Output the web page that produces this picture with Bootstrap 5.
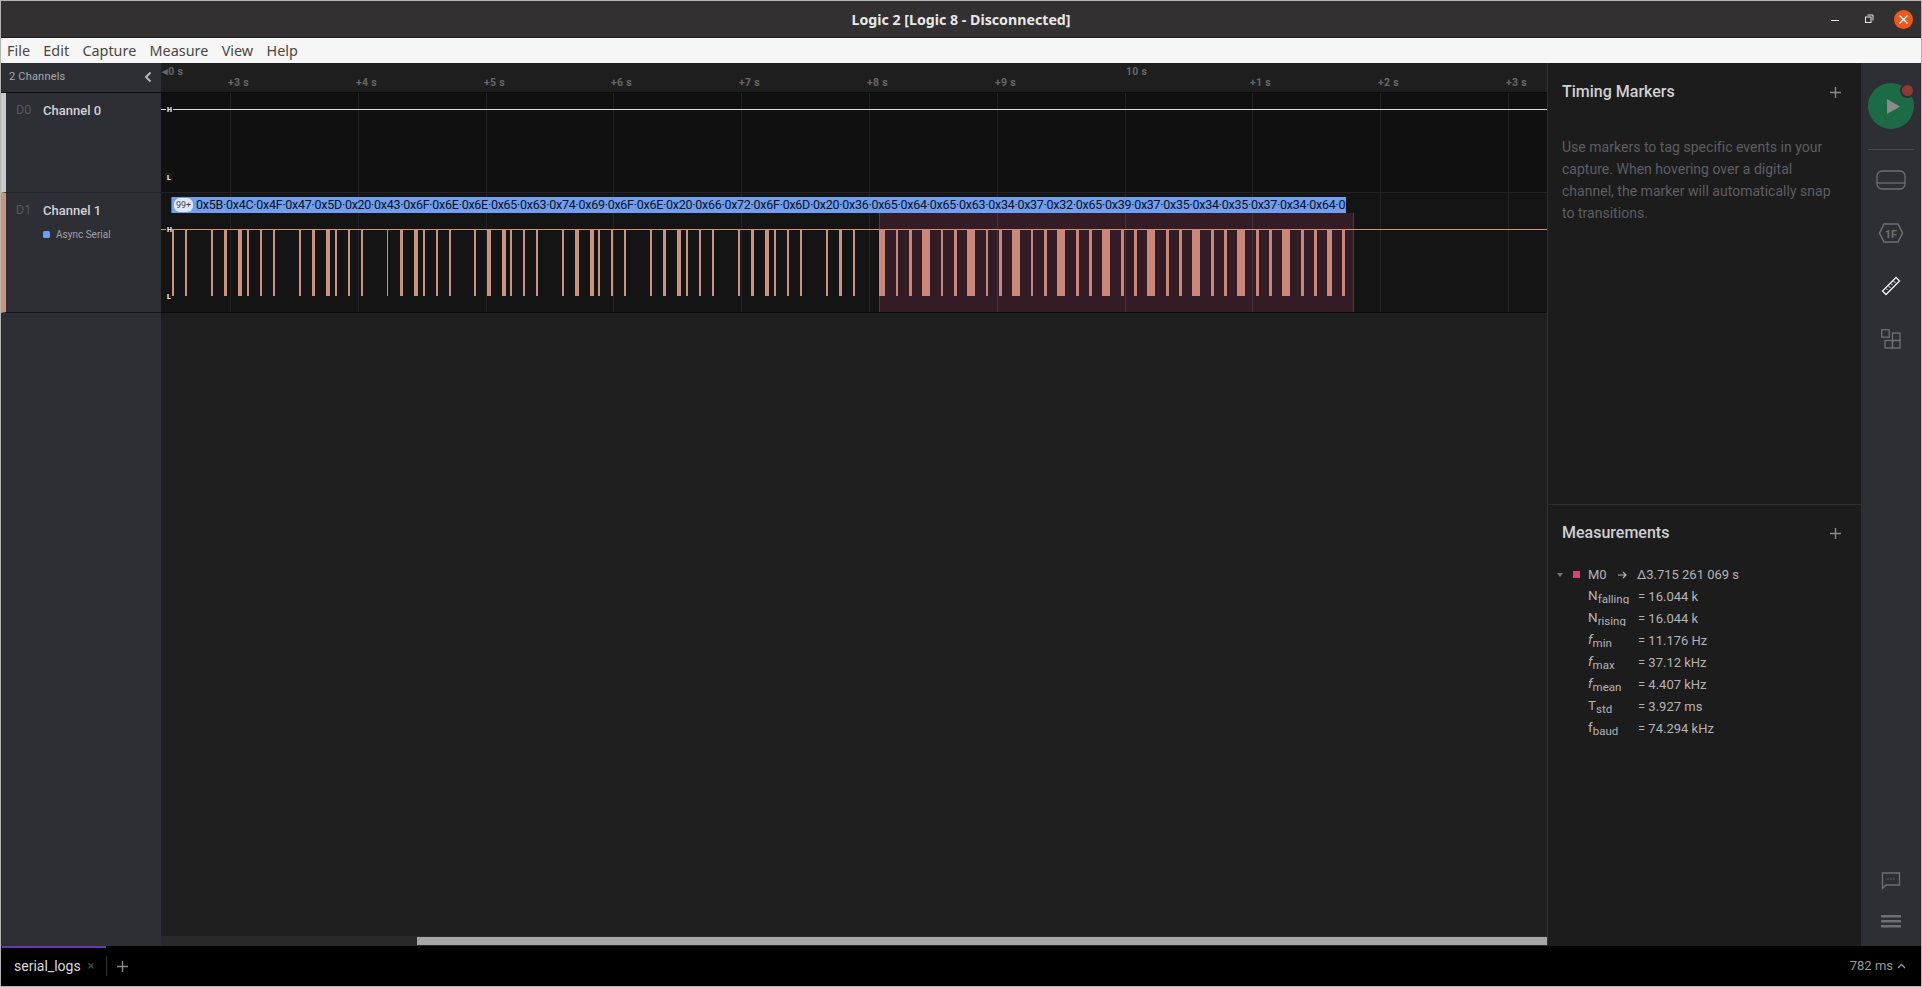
<!DOCTYPE html>
<html lang="en">
<head>
    <meta charset="utf-8">
    <title>Logic 2 [Logic 8 - Disconnected]</title>
    <link rel="stylesheet" href="https://cdn.jsdelivr.net/npm/bootstrap@5.3.0/dist/css/bootstrap.min.css">
    <style>
        html, body { height: 100%; overflow: hidden; background: #1e1e1f; }
        body { font-family: Roboto, "Liberation Sans", sans-serif; }

        .app-window { height: 987px; border: 1px solid #b4b4b4; }

        /* title + menu */
        .title-bar { height: 37px; flex: none; background: #323030; border-bottom: 1px solid #1f1e1e; color: #e8e8e8; position: relative; }
        .title-text { font: 700 14.2px "Noto Sans", sans-serif; }
        .win-controls { position: absolute; right: 8px; top: 0; height: 36px; }
        .win-min { margin-right: 24px; }
        .win-restore { margin-right: 20px; }
        .win-close { width: 19px; height: 19px; border-radius: 50%; background: #f0571d; }
        .menu-strip { height: 25px; flex: none; background: #f6f6f6; color: #4b4640; font: 14.4px "Noto Sans", sans-serif; padding-left: 6px; gap: 13.3px; }

        /* channels */
        .channel-col { width: 160px; flex: none; background: #2e2f35; }
        .channel-head { height: 30px; border-bottom: 1px solid #0d0d0e; color: #a6a7aa; font-size: 11px; letter-spacing: .2px; padding: 0 9px 1px 8px; }
        .channel-item { border-bottom: 1px solid #222327; border-left: 5px solid #c9c9c9; padding: 8px 0 0 10px; }
        .channel-zero { height: 100px; }
        .channel-one { height: 120px; border-left-color: #cb937c; border-bottom-color: #16161a; }
        .channel-tag { width: 27px; color: #57585d; font-size: 12.5px; }
        .channel-name { color: #d2d2d4; font-size: 13px; font-weight: 500; }
        .analyzer-line { color: #a0a1a5; font-size: 10px; margin: 6px 0 0 27px; }
        .analyzer-dot { width: 7px; height: 7px; border-radius: 1.5px; background: #6f9ff0; margin-right: 6px; }

        /* timeline */
        .time-col { width: 1386px; flex: none; background: #1e1e1f; }
        .time-ruler { height: 30px; flex: none; position: relative; background: #1e1e1f; border-bottom: 1px solid #0b0b0c; }
        .tick-label { position: absolute; color: #66676a; font-size: 10.5px; font-weight: 700; line-height: 12px; white-space: nowrap; letter-spacing: .3px; }
        .wave-row { display: block; flex: none; width: 1386px; }
        .h-scroll { height: 10px; background: #292929; margin-top: auto; flex: none; padding-left: 256px; padding-top: 1px; }
        .h-thumb { height: 8px; background: #a5a5a5; }

        .proto-bar { position: absolute; left: 10px; top: 134px; width: 1175px; height: 16px; background: #709ff0; border-left: 1px solid #4269b0; overflow: hidden; color: #0a0f1a; font-size: 12.5px; line-height: 15px; white-space: nowrap; }
        .proto-count { width: 19px; height: 14px; margin: 1px 3px 0 2px; background: #dfe9fb; border-radius: 6px; color: #444; font-size: 9px; line-height: 14px; text-align: center; float: left; letter-spacing: 0; }
        .proto-bytes { letter-spacing: -.27px; }

        /* side panel */
        .side-col { width: 314px; flex: none; background: #1c1c1d; border-left: 1px solid #303033; }
        .side-top { height: 442px; flex: none; border-bottom: 1px solid #303033; padding: 14px 14px; }
        .side-bottom { padding: 13px 14px 0; }
        .side-heading { color: #d0d0d2; font-size: 16px; font-weight: 500; line-height: 30px; margin: 0; }
        .side-hint { color: #5e5e62; font-size: 14px; line-height: 22px; margin-top: 29px; padding-right: 16px; letter-spacing: .02px; }
        .plus-ico { width: 11px; height: 11px; margin-right: 6px; }
        .measure-list { color: #b4b4b6; font-size: 13px; margin-top: 16px; line-height: 22px; }
        .measure-row { height: 22px; padding-left: 26px; }
        .measure-key { width: 50px; height: 18px; overflow: hidden; flex: none; line-height: 19px; font-size: 13.5px; }
        .measure-key sub { font-size: 11.5px; bottom: -.3em; }
        .fold-arrow { position: absolute; left: -5px; top: 9px; border: 3.5px solid transparent; border-top: 4px solid #77777a; border-bottom: 0; }
        .m-swatch { position: absolute; left: 11px; top: 7px; width: 7px; height: 7px; background: #d83f7d; }
        .m-name { width: 30px; }
        .m-arrow { margin-right: 10px; }

        /* right rail */
        .rail-col { width: 60px; flex: none; background: #2e2f35; padding-top: 20px; }
        .run-btn { width: 46px; height: 46px; border-radius: 50%; background: #1b6b47; position: relative; flex: none; }
        .run-tri { margin-left: 4px; }
        .run-dot { position: absolute; right: -1px; top: 0; width: 15px; height: 15px; border-radius: 50%; background: #8e3b36; border: 2px solid #2e2f35; }
        .rail-sep { width: 46px; height: 1px; background: #4a4b50; margin: 20px 0 20px; flex: none; }
        .rail-ico { display: block; flex: none; }
        .rail-gap { margin-top: 33px; }
        .rail-chat { margin-bottom: 24px; }
        .rail-menu { margin-bottom: 18px; }

        /* bottom tabs */
        .tab-strip { height: 40px; flex: none; background: #000; color: #dcdcdc; font-size: 14px; }
        .tab-active { width: 104px; height: 40px; margin-left: 1px; border-top: 2px solid #6b35b5; padding: 0 0 2px 12px; }
        .tab-close { color: #4e4e50; font-size: 13px; margin-left: 7px; }
        .tab-sep { width: 1px; height: 20px; background: #333; margin-right: 10px; }
        .status-time { color: #9a9a9a; font-size: 13px; padding-right: 15px; }
    </style>
</head>
<body>
<div class="app-window d-flex flex-column">

    <!-- Title bar -->
    <div class="title-bar d-flex align-items-center justify-content-center">
        <span class="title-text">Logic 2 [Logic 8 - Disconnected]</span>
        <div class="win-controls d-flex align-items-center">
            <svg class="win-min" width="10" height="10" viewBox="0 0 10 10"><rect x="1" y="6" width="8" height="1" fill="#e8e8e8"/></svg>
            <svg class="win-restore" width="10" height="10" viewBox="0 0 10 10" fill="none" stroke="#e8e8e8"><rect x="1.500" y="3" width="5.500" height="5.500"/><path d="M3.500 1H9V6.500"/></svg>
            <div class="win-close d-flex align-items-center justify-content-center">
                <svg width="9" height="9" viewBox="0 0 9 9" stroke="#fff" stroke-width="1.300"><path d="M.5.5l8 8M8.500.5l-8 8"/></svg>
            </div>
        </div>
    </div>

    <!-- Menu -->
    <div class="menu-strip d-flex align-items-center">
        <span>File</span><span>Edit</span><span>Capture</span><span>Measure</span><span>View</span><span>Help</span>
    </div>

    <div class="d-flex flex-grow-1" style="min-height:0">

        <!-- Channels -->
        <div class="channel-col">
            <div class="channel-head d-flex align-items-center justify-content-between">
                <span>2 Channels</span>
                <svg width="8" height="12" viewBox="0 0 8 12" fill="none" stroke="#b5b6b9" stroke-width="2"><path d="M6.500 1.500L2 6l4.500 4.500"/></svg>
            </div>
            <div class="channel-item channel-zero">
                <div class="d-flex align-items-center"><span class="channel-tag">D0</span><span class="channel-name">Channel 0</span></div>
            </div>
            <div class="channel-item channel-one">
                <div class="d-flex align-items-center"><span class="channel-tag">D1</span><span class="channel-name">Channel 1</span></div>
                <div class="analyzer-line d-flex align-items-center"><span class="analyzer-dot"></span>Async Serial</div>
            </div>
        </div>

        <!-- Timeline -->
        <div class="time-col d-flex flex-column position-relative">
            <div class="time-ruler" id="ruler"></div>
            <svg class="wave-row" id="row0" height="100"></svg>
            <svg class="wave-row" id="row1" height="120"></svg>
            <div class="proto-bar">
                <span class="proto-count">99+</span><span class="proto-bytes">0x5B·0x4C·0x4F·0x47·0x5D·0x20·0x43·0x6F·0x6E·0x6E·0x65·0x63·0x74·0x69·0x6F·0x6E·0x20·0x66·0x72·0x6F·0x6D·0x20·0x36·0x65·0x64·0x65·0x63·0x34·0x37·0x32·0x65·0x39·0x37·0x35·0x34·0x35·0x37·0x34·0x64·0x</span>
            </div>
            <div class="h-scroll"><div class="h-thumb"></div></div>
        </div>

        <!-- Side panel -->
        <div class="side-col d-flex flex-column">
            <div class="side-top">
                <div class="d-flex align-items-center justify-content-between">
                    <h2 class="side-heading">Timing Markers</h2>
                    <svg class="plus-ico" viewBox="0 0 11 11" stroke="#8a8a8d" stroke-width="1.400"><path d="M5.500 0v11M0 5.500h11"/></svg>
                </div>
                <p class="side-hint">Use markers to tag specific events in your capture. When hovering over a digital channel, the marker will automatically snap to transitions.</p>
            </div>
            <div class="side-bottom">
                <div class="d-flex align-items-center justify-content-between">
                    <h2 class="side-heading">Measurements</h2>
                    <svg class="plus-ico" viewBox="0 0 11 11" stroke="#8a8a8d" stroke-width="1.400"><path d="M5.500 0v11M0 5.500h11"/></svg>
                </div>
                <div class="measure-list">
                    <div class="measure-row d-flex position-relative">
                        <span class="fold-arrow"></span><span class="m-swatch"></span>
                        <span class="m-name">M0</span>
                        <svg class="m-arrow" width="9" height="22" viewBox="0 0 9 22" fill="none" stroke="#b4b4b6" stroke-width="1.200"><path d="M0 11h8M5 8l3 3-3 3"/></svg>
                        <span>Δ3.715 261 069 s</span>
                    </div>
                    <div class="measure-row d-flex"><span class="measure-key">N<sub>falling</sub></span><span>= 16.044 k</span></div>
                    <div class="measure-row d-flex"><span class="measure-key">N<sub>rising</sub></span><span>= 16.044 k</span></div>
                    <div class="measure-row d-flex"><span class="measure-key"><i>f</i><sub>min</sub></span><span>= 11.176 Hz</span></div>
                    <div class="measure-row d-flex"><span class="measure-key"><i>f</i><sub>max</sub></span><span>= 37.12 kHz</span></div>
                    <div class="measure-row d-flex"><span class="measure-key"><i>f</i><sub>mean</sub></span><span>= 4.407 kHz</span></div>
                    <div class="measure-row d-flex"><span class="measure-key">T<sub>std</sub></span><span>= 3.927 ms</span></div>
                    <div class="measure-row d-flex"><span class="measure-key">f<sub>baud</sub></span><span>= 74.294 kHz</span></div>
                </div>
            </div>
        </div>

        <!-- Right rail -->
        <div class="rail-col d-flex flex-column align-items-center">
            <div class="run-btn d-flex align-items-center justify-content-center">
                <svg class="run-tri" width="13" height="15" viewBox="0 0 13 15"><path d="M0 0l13 7.500L0 15z" fill="#8a8a8a"/></svg>
                <span class="run-dot"></span>
            </div>
            <div class="rail-sep"></div>
            <svg class="rail-ico" width="30" height="20" viewBox="0 0 30 20" fill="none" stroke="#6e6f73" stroke-width="1.300"><rect x="1" y="1" width="28" height="18" rx="5"/><path d="M1 13h28"/></svg>
            <svg class="rail-ico rail-gap" width="26" height="20" viewBox="0 0 26 20" fill="none" stroke="#6e6f73" stroke-width="1.500"><path d="M6 1h14l4.500 9-4.500 9H6L1.500 10z"/><text x="13" y="14.500" text-anchor="middle" font-family="Roboto" font-size="11" font-weight="700" fill="#6e6f73" stroke="none">1F</text></svg>
            <svg class="rail-ico rail-gap" width="20" height="20" viewBox="0 0 20 20" fill="none" stroke="#f2f2f2" stroke-width="1.300"><path d="M15 1.500l3.500 3.500L5 18.500 1.500 15z"/><path d="M5 12.500l1.500 1.500M7.500 10l2 2M10 7.500l1.500 1.500M12.500 5l2 2" stroke-width="1"/></svg>
            <svg class="rail-ico rail-gap" width="20" height="20" viewBox="0 0 20 20" fill="none" stroke="#6e6f73" stroke-width="1.300"><rect x=".7" y=".7" width="7.500" height="7.500"/><rect x="11.500" y="4" width="7.500" height="7.500"/><rect x="4" y="11.500" width="7.500" height="7.500"/><rect x="11.500" y="11.500" width="7.500" height="7.500"/></svg>
            <svg class="rail-ico rail-chat mt-auto" width="20" height="18" viewBox="0 0 20 18" fill="none" stroke="#6e6f73" stroke-width="1.300"><path d="M1.500 1h17v12H5l-3.500 3.500z"/><path d="M6.500 7h1M9.500 7h1M12.500 7h1"/></svg>
            <svg class="rail-ico rail-menu" width="20" height="14" viewBox="0 0 20 14" fill="#6e6f73"><rect y="1" width="20" height="2.500" rx=".5"/><rect y="6" width="20" height="2.500" rx=".5"/><rect y="11" width="20" height="2.500" rx=".5"/></svg>
        </div>
    </div>

    <!-- Tabs -->
    <div class="tab-strip d-flex align-items-center">
        <div class="tab-active d-flex align-items-center">serial_logs<span class="tab-close">×</span></div>
        <span class="tab-sep"></span>
        <svg width="11" height="11" viewBox="0 0 11 11" stroke="#8a8a8d" stroke-width="1.400"><path d="M5.500 0v11M0 5.500h11"/></svg>
        <div class="status-time ms-auto d-flex align-items-center">782 ms
            <svg class="ms-1" width="9" height="6" viewBox="0 0 9 6" fill="none" stroke="#9a9a9a" stroke-width="1.300"><path d="M1 5l3.500-3.500L8 5"/></svg>
        </div>
    </div>
</div>

<script src="https://cdn.jsdelivr.net/npm/bootstrap@5.3.0/dist/js/bootstrap.bundle.min.js"></script>
<script>
    // timeline origin in page pixels
    const ORIGIN = 161;
    const ticks = [230, 358, 486, 613, 741, 869, 997, 1125, 1252, 1380, 1508];
    const tickNames = ['+3 s', '+4 s', '+5 s', '+6 s', '+7 s', '+8 s', '+9 s', null, '+1 s', '+2 s', '+3 s'];

    // pulses measured off the capture: [start, end]
    const pulses = [[172,174],[185,187],[211,213],[224,227],[238,242],[247,249],[260,262],[273,275],[299,301],[312,315],[326,330],[335,337],[348,350],[361,363],[387,388],[400,403],[414,418],[423,425],[436,438],[449,451],[474,476],[487,491],[502,506],[510,512],[523,525],[536,538],[562,564],[575,579],[590,594],[598,600],[611,613],[624,626],[650,652],[663,666],[677,681],[686,688],[699,701],[712,714],[738,740],[751,754],[765,769],[774,776],[787,789],[800,802],[826,828],[839,842],[853,855]];
    const selected = [[879,885],[896,898],[909,912],[922,930],[941,943],[954,957],[967,975],[986,988],[999,1002],[1012,1020],[1031,1033],[1044,1047],[1057,1065],[1076,1079],[1089,1092],[1102,1110],[1121,1124],[1134,1137],[1147,1155],[1166,1169],[1179,1182],[1192,1200],[1211,1214],[1224,1227],[1237,1245],[1256,1259],[1269,1272],[1282,1290],[1301,1304],[1314,1317],[1327,1332],[1342,1345]];

    const rect = (x, y, w, h, fill) => `<rect x="${x}" y="${y}" width="${w}" height="${h}" fill="${fill}"/>`;
    const rail = (y) => `<text x="6" y="${y}" font-family="Roboto" font-size="7" font-weight="900" fill="#eee">`;

    function tickLines(h) {
        return ticks.map(t => rect(t - ORIGIN, 0, 1, h, '#232324')).join('');
    }

    // ruler
    const ruler = document.getElementById('ruler');
    ruler.innerHTML = `<span class="tick-label" style="left:1px;top:3px">◂0 s</span><span class="tick-label" style="left:${1126 - ORIGIN}px;top:3px">10 s</span>`
        + ticks.map((t, i) => tickNames[i] ? `<span class="tick-label" style="left:${t - ORIGIN - 2}px;top:14px">${tickNames[i]}</span>` : '').join('');

    // channel 0
    document.getElementById('row0').innerHTML = rect(0, 0, 1386, 99, '#101011') + tickLines(99)
        + rect(0, 16, 1386, 1, '#dcdcdc')
        + rect(5, 11, 7, 11, '#101011')
        + rail(19) + 'H</text>' + rect(4, 80, 8, 9, '#191919') + rail(87) + 'L</text>'
        + rect(0, 99, 1386, 1, '#222327');

    // channel 1
    const waveTop = 36, waveLow = 103;
    let row1 = rect(0, 0, 1386, 119, '#141414') + tickLines(119);
    row1 += rect(879 - ORIGIN, 20, 1354 - 879, 99, '#331c26');
    row1 += ticks.filter(t => t > 879 && t < 1354).map(t => rect(t - ORIGIN, 20, 1, 99, '#43303a')).join('');
    row1 += rect(879 - ORIGIN, 20, 1, 99, '#6b2f45') + rect(1353 - ORIGIN, 20, 1, 99, '#6b2f45');
    row1 += rect(0, waveTop, 1386, 1, '#cb937c');
    row1 += pulses.map(p => rect(p[0] - ORIGIN, waveTop, p[1] - p[0], waveLow - waveTop, '#cb937c')).join('');
    row1 += selected.map(p => rect(p[0] - ORIGIN, waveTop, p[1] - p[0], waveLow - waveTop, '#cb877a')).join('');
    row1 += rect(5, 31, 6, 11, '#141414') + rail(39) + 'H</text>' + rect(5, 98, 6, 9, '#141414') + rail(106) + 'L</text>';
    row1 += rect(0, 119, 1386, 1, '#0b0b0c');
    document.getElementById('row1').innerHTML = row1;
</script>
</body>
</html>
